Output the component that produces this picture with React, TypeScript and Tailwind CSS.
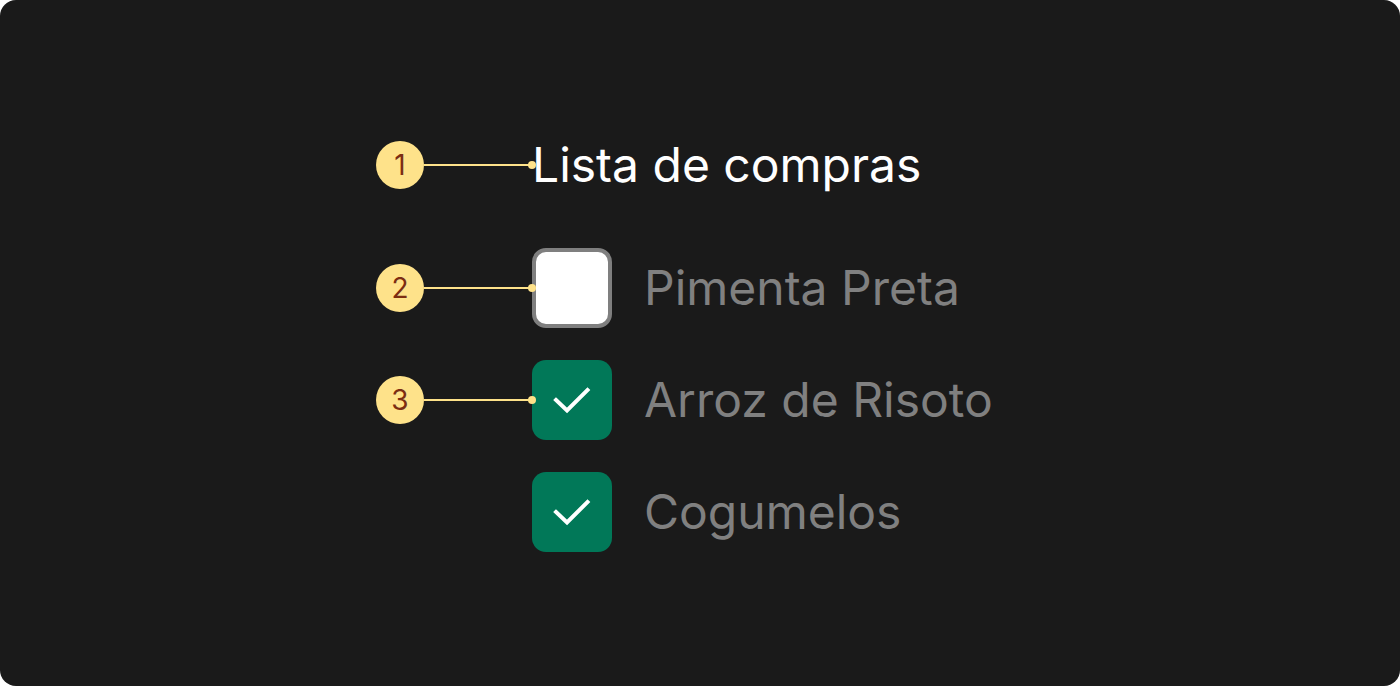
import React from 'react';

interface Item {
  label: string;
  checked: boolean;
  badge?: number;
}

const ITEMS: Item[] = [
  { label: 'Pimenta Preta', checked: false, badge: 2 },
  { label: 'Arroz de Risoto', checked: true, badge: 3 },
  { label: 'Cogumelos', checked: true },
];

const FONT = { fontFamily: 'Inter, "Noto Sans", sans-serif' };

// Numbered callout: yellow circle + leader line ending in a dot
const Callout: React.FC<{ n?: number }> = ({ n }) => {
  if (!n) return <div className="w-[156px] shrink-0" />;
  return (
    <div className="flex items-center w-[156px] shrink-0">
      <div className="w-12 h-12 rounded-full bg-[#fee28a] flex items-center justify-center text-[28px] leading-none text-[#7c2d12]">
        {n}
      </div>
      <div className="relative flex-1 h-[2px] bg-[#fee28a]">
        <div className="absolute -right-1 -top-[3px] w-2 h-2 rounded-full bg-[#fee28a]" />
      </div>
    </div>
  );
};

const Checkbox: React.FC<{ checked: boolean }> = ({ checked }) =>
  checked ? (
    <div className="w-20 h-20 rounded-[14px] bg-[#017858] flex items-center justify-center">
      <svg width="80" height="80" viewBox="0 0 80 80" fill="none">
        <polyline points="24,40 35,50.5 55.5,30" stroke="white" strokeWidth="4" strokeLinecap="square" strokeLinejoin="miter" />
      </svg>
    </div>
  ) : (
    <div className="w-20 h-20 rounded-[14px] bg-white border-4 border-[#7f7f7f]" />
  );

export default function App() {
  return (
    <div className="w-[1400px] h-[686px] bg-white" style={FONT}>
      <div className="w-full h-full rounded-2xl bg-[#1a1a1a] pl-[376px] pt-[141px]">
        <div className="flex items-center h-12">
          <Callout n={1} />
          <h1 className="text-[48px] leading-none text-white">Lista de compras</h1>
        </div>
        <div className="mt-[59px] flex flex-col gap-8">
          {ITEMS.map((item) => (
            <div key={item.label} className="flex items-center h-20">
              <Callout n={item.badge} />
              <Checkbox checked={item.checked} />
              <span className="ml-8 text-[48px] leading-none text-[#808080]">{item.label}</span>
            </div>
          ))}
        </div>
      </div>
    </div>
  );
}
